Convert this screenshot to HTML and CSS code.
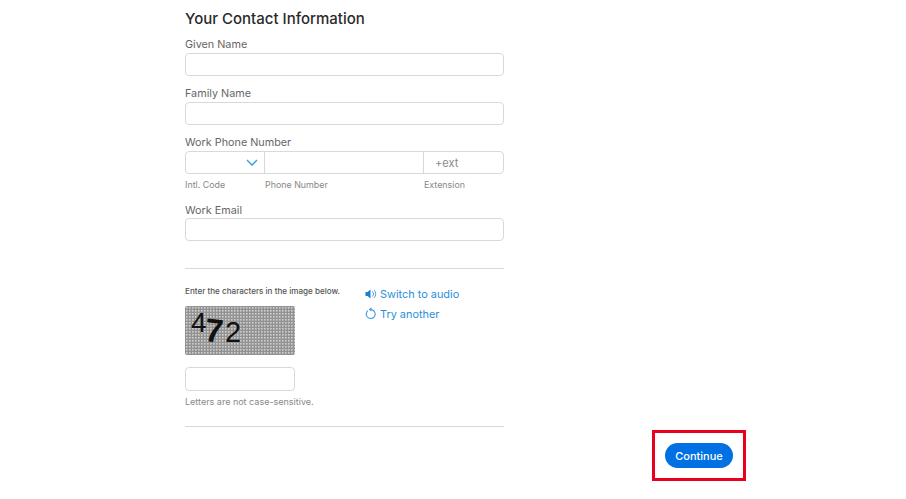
FILE: index.html
```html
<!DOCTYPE html>
<html lang="en">
<head>
  <meta charset="UTF-8" />
  <title>Your Contact Information</title>
  <link rel="stylesheet" href="styles.css">
</head>
<body>
  <div class="form">
    <h2 class="title">Your Contact Information</h2>

    <label class="label">Given Name</label>
    <div class="input"></div>

    <label class="label">Family Name</label>
    <div class="input"></div>

    <label class="label">Work Phone Number</label>
    <div class="phone">
      <div class="cell code">
        <svg class="chevron" width="12" height="7" viewBox="0 0 12 7"><path d="M1 1l5 5 5-5" fill="none" stroke="#2f9be0" stroke-width="1.3"/></svg>
      </div>
      <div class="cell number"></div>
      <div class="cell ext">+ext</div>
    </div>
    <div class="hints">
      <span class="hint code">Intl. Code</span>
      <span class="hint number">Phone Number</span>
      <span class="hint ext">Extension</span>
    </div>

    <label class="label email">Work Email</label>
    <div class="input email"></div>

    <hr class="rule first">

    <div class="captcha-row">
      <div class="captcha-left">
        <p class="captcha-note">Enter the characters in the image below.</p>
        <svg class="captcha" width="110" height="49" viewBox="0 0 110 49">
          <defs>
            <pattern id="dots" width="3" height="3" patternUnits="userSpaceOnUse">
              <rect width="3" height="3" fill="#929292"/>
              <rect x="1" y="1" width="1.6" height="1.6" fill="#cfcfcf"/>
            </pattern>
          </defs>
          <rect width="110" height="49" rx="2" fill="url(#dots)"/>
          <text x="6" y="25.5" class="cap-char" font-size="28">4</text>
          <text x="20" y="36" class="cap-char bold" font-size="33" transform="rotate(6 28 24)">7</text>
          <text x="40" y="36" class="cap-char" font-size="29">2</text>
        </svg>
        <div class="input small"></div>
        <p class="case-note">Letters are not case-sensitive.</p>
      </div>
      <div class="captcha-links">
        <a class="link">
          <svg width="12" height="12" viewBox="0 0 12 12"><path d="M0.5 4h2L5.5 1.5v9L2.500 8h-2z" fill="#1d7fc9"/><path d="M7.500 3.500a3.500 3.500 0 0 1 0 5M9 2a5.500 5.500 0 0 1 0 8" fill="none" stroke="#55a5de" stroke-width="1"/></svg>
          Switch to audio
        </a>
        <a class="link">
          <svg width="12" height="13" viewBox="0 0 12 13"><path d="M2.800 3.600a4.500 4.500 0 1 0 3.700-1" fill="none" stroke="#3f9bdc" stroke-width="1.100"/><path d="M6.500 0.300v4.200l-2.800-2.100z" fill="#3f9bdc"/></svg>
          Try another
        </a>
      </div>
    </div>

    <hr class="rule last">
  </div>

  <div class="footer">
    <div class="highlight">
      <button class="continue">Continue</button>
    </div>
  </div>
</body>
</html>
```

FILE: styles.css
```css
* { box-sizing: border-box; }

body {
  margin: 0;
  background: #fff;
  font-family: Inter, "Liberation Sans", sans-serif;
  color: #333;
  overflow: hidden;
}

.form {
  width: 319px;
  margin-left: 185px;
  padding-top: 10px;
}

.title {
  margin: 0 0 8px;
  font-size: 15px;
  line-height: 18px;
  font-weight: 500;
  color: #2a2a2a;
}

.label {
  display: block;
  height: 16px;
  padding-top: 1px;
  font-size: 10.8px;
  line-height: 16px;
  color: #666;
}

.input {
  height: 23px;
  margin: 1px 0 9px;
  border: 1px solid #d9d9d9;
  border-radius: 4px;
  background: #fff;
}

.input.email {
  margin-top: 0;
}

.input.small {
  width: 110px;
  height: 24px;
  margin: 12px 0 4px;
}

.phone {
  display: flex;
  height: 23px;
  margin-top: 1px;
  border: 1px solid #d9d9d9;
  border-radius: 4px;
}

.cell {
  font-size: 11px;
  line-height: 22px;
  color: #888;
}

.cell.code {
  width: 79px;
  border-right: 1px solid #d9d9d9;
  display: flex;
  align-items: center;
  justify-content: flex-end;
  padding-right: 6px;
}

.cell.number {
  width: 159px;
  border-right: 1px solid #d9d9d9;
}

.cell.ext {
  padding-left: 11px;
}

.hints {
  display: flex;
  margin-top: 4px;
  height: 14px;
}

.hint {
  font-size: 8.9px;
  line-height: 14px;
  color: #888;
}

.hint.code { width: 80px; }
.hint.number { width: 159px; }

.label.email {
  margin-top: 10px;
}

.rule {
  margin: 0;
  border: 0;
  border-top: 1px solid #d9d9d9;
}

.rule.first { margin-top: 27px; }
.rule.last { margin-top: 17px; }

.captcha-row {
  display: flex;
  padding-top: 16px;
}

.captcha-left {
  width: 180px;
}

.captcha-note {
  margin: 0 0 8px;
  font-size: 8.1px;
  line-height: 13px;
  font-weight: 500;
  color: #555;
  white-space: nowrap;
}

.captcha {
  display: block;
}

.cap-char {
  font-family: "Liberation Sans", sans-serif;
  fill: #111;
}

.cap-char.bold {
  font-weight: bold;
}

.case-note {
  margin: 0;
  font-size: 9px;
  line-height: 14px;
  color: #888;
}

.captcha-links {
  display: flex;
  flex-direction: column;
  gap: 5px;
  margin-top: 1px;
}

.link {
  display: flex;
  align-items: center;
  gap: 3px;
  height: 15px;
  font-size: 10.9px;
  color: #2b8fd8;
  white-space: nowrap;
}

.footer {
  display: flex;
  justify-content: flex-end;
  margin: 3px 160px 0 0;
}

.highlight {
  display: flex;
  align-items: center;
  justify-content: center;
  width: 94px;
  height: 51px;
  border: 3px solid #e8001c;
}

.continue {
  width: 68px;
  height: 25px;
  padding: 0;
  border: 0;
  border-radius: 13px;
  background: #0071e3;
  color: #fff;
  font-family: Inter, "Liberation Sans", sans-serif;
  font-size: 11px;
  font-weight: 500;
}
```
